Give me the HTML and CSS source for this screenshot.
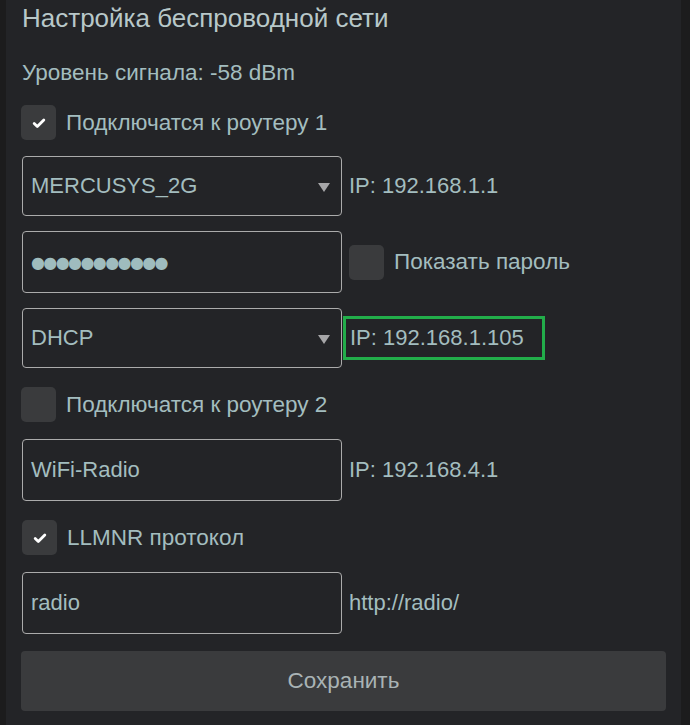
FILE: index.html
```html
<!DOCTYPE html>
<html lang="ru">
<head>
<meta charset="utf-8">
<link rel="stylesheet" href="styles.css">
</head>
<body>
<div class="panel">
  <h1 class="title">Настройка беспроводной сети</h1>
  <div class="signal">Уровень сигнала: -58 dBm</div>

  <label class="check-row r1">
    <span class="box checked"><svg viewBox="0 0 16 16" width="16" height="16"><path d="M3.2 8.4l3.1 3L12.8 5" fill="none" stroke="#fff" stroke-width="2.8" stroke-linecap="round" stroke-linejoin="round"/></svg></span>
    <span class="lbl">Подключатся к роутеру 1</span>
  </label>

  <div class="row r-sel1">
    <div class="control select"><span>MERCUSYS_2G</span><span class="arrow"></span></div>
    <span class="side">IP: 192.168.1.1</span>
  </div>

  <div class="row r-pass">
    <div class="control input tall"><span class="dots">●●●●●●●●●●●</span></div>
    <label class="inline-check">
      <span class="box"></span>
      <span class="lbl">Показать пароль</span>
    </label>
  </div>

  <div class="row r-sel2">
    <div class="control select"><span>DHCP</span><span class="arrow"></span></div>
    <span class="side framed">IP: 192.168.1.105</span>
  </div>

  <label class="check-row r2">
    <span class="box"></span>
    <span class="lbl">Подключатся к роутеру 2</span>
  </label>

  <div class="row r-ap">
    <div class="control input tall"><span>WiFi-Radio</span></div>
    <span class="side">IP: 192.168.4.1</span>
  </div>

  <label class="check-row r3">
    <span class="box checked"><svg viewBox="0 0 16 16" width="16" height="16"><path d="M3.2 8.4l3.1 3L12.8 5" fill="none" stroke="#fff" stroke-width="2.8" stroke-linecap="round" stroke-linejoin="round"/></svg></span>
    <span class="lbl">LLMNR протокол</span>
  </label>

  <div class="row r-host">
    <div class="control input tall"><span>radio</span></div>
    <span class="side">http://radio/</span>
  </div>

  <button class="save">Сохранить</button>
</div>
</body>
</html>
```

FILE: styles.css
```css
html, body {
  margin: 0;
  padding: 0;
  background: #1c1c1d;
  height: 100%;
}
body {
  font-family: "Liberation Sans", Arial, sans-serif;
  color: #a3bdbf;
}
.panel {
  margin-left: 6px;
  width: 675px;
  min-height: 725px;
  box-sizing: border-box;
  background: #232427;
  padding: 0 15px 0 16px;
}
.title {
  margin: 0;
  font-size: 26px;
  font-weight: normal;
  line-height: 36px;
  color: #b8c8c9;
}
.signal {
  margin-top: 25px;
  font-size: 22.5px;
  line-height: 24px;
}
.check-row {
  display: flex;
  align-items: center;
  gap: 10px;
  height: 35px;
}
.r1 { margin-top: 20px; margin-left: -1px; }
.r2 { margin-top: 19px; margin-left: -1px; }
.r3 { margin-top: 19px; }
.box {
  width: 35px;
  height: 35px;
  border-radius: 5px;
  background: #3a3b3d;
  display: flex;
  align-items: center;
  justify-content: center;
  flex: none;
}
.lbl {
  font-size: 22.5px;
  line-height: 24px;
}
.row {
  display: flex;
  align-items: center;
  gap: 7px;
}
.r-sel1 { margin-top: 16px; }
.r-pass { margin-top: 15px; }
.r-sel2 { margin-top: 15px; }
.r-ap { margin-top: 17px; }
.r-host { margin-top: 17px; }
.control {
  width: 320px;
  height: 60px;
  box-sizing: border-box;
  border: 1px solid #ababab;
  border-radius: 4px;
  display: flex;
  align-items: center;
  padding: 0 11px 0 8px;
  font-size: 22px;
  color: #a3bdbf;
  flex: none;
}
.control.tall { height: 62px; }
.select { justify-content: space-between; }
.arrow {
  width: 0;
  height: 0;
  border-left: 6.5px solid transparent;
  border-right: 6.5px solid transparent;
  border-top: 9px solid #a6a6a8;
  margin-top: 2px;
}
.dots {
  font-family: "DejaVu Sans", sans-serif;
  font-size: 16px;
  letter-spacing: -1.6px;
  color: #9fbcbe;
}
.side {
  font-size: 22px;
  line-height: 26px;
}
.framed {
  margin-left: -6px;
  border: 3px solid #22ad4a;
  padding: 6px 18px 6px 4px;
}
.inline-check {
  display: flex;
  align-items: center;
  gap: 10px;
}
.save {
  display: block;
  margin-top: 17px;
  margin-left: -1px;
  width: 645px;
  height: 60px;
  border: none;
  border-radius: 4px;
  background: #3a3b3d;
  color: #a9b3b5;
  font-family: "Liberation Sans", Arial, sans-serif;
  font-size: 22.5px;
}
```
